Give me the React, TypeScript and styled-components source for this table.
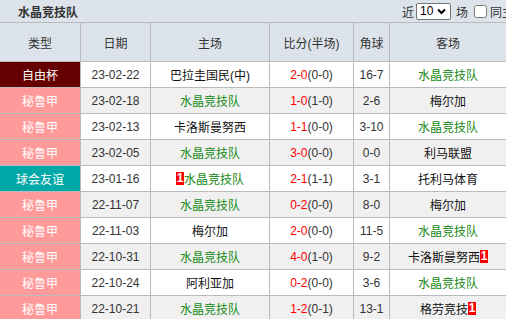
import React from "react";
import styled, { createGlobalStyle } from "styled-components";

const GlobalStyle = createGlobalStyle`
  html, body {
    margin: 0;
    padding: 0;
    background: #fff;
    font-family: "Liberation Sans", "Noto Sans CJK SC", sans-serif;
    font-size: 12px;
    color: #333;
  }
`;

const Panel = styled.div`
  width: 506px;
  overflow: hidden;
`;

const TitleBar = styled.div`
  height: 22px;
  background: #dde3eb;
  display: flex;
  align-items: center;
  justify-content: space-between;
  padding-left: 18px;
  white-space: nowrap;
`;

const Title = styled.div`
  font-weight: bold;
  font-size: 12px;
  color: #333;
`;

const Filter = styled.div`
  display: flex;
  align-items: center;
  margin-right: -20px;
  color: #333;
`;

const SelectBox = styled.span`
  display: inline-flex;
  align-items: center;
  box-sizing: border-box;
  width: 35px;
  height: 17px;
  margin: 0 5px 0 2px;
  padding: 0 4px 0 3px;
  border: 1px solid #767676;
  border-radius: 2px;
  background: #fff;
`;

const Select = styled.select`
  appearance: none;
  -webkit-appearance: none;
  width: 16px;
  flex: none;
  height: 15px;
  font-size: 12px;
  font-family: "Liberation Sans", sans-serif;
  padding: 0;
  border: none;
  background: transparent;
  color: #000;
  outline: none;
`;

const Chevron = styled.svg`
  flex: none;
  margin-left: 1px;
`;

const Check = styled.input`
  width: 13px;
  height: 13px;
  margin: 0 3px 0 6px;
`;

const Table = styled.div`
  display: flex;
  flex-direction: column;
  gap: 1px;
  background: #bbb;
  border-top: 1px solid #bbb;
`;

const Row = styled.div<{ $head?: boolean }>`
  display: grid;
  grid-template-columns: 80px 69px 118px 83px 35px 1fr;
  column-gap: 1px;
  height: ${(p) => (p.$head ? "38px" : "25px")};
`;

const Cell = styled.div<{ $bg?: string; $color?: string }>`
  background: ${(p) => p.$bg || "#fff"};
  color: ${(p) => p.$color || "#333"};
  display: flex;
  align-items: center;
  justify-content: center;
  white-space: nowrap;
  overflow: hidden;
`;

const HeadCell = styled(Cell)`
  background: #dde3eb;
  color: #333;
`;

const Red = styled.span`
  color: #f00;
`;

const Badge = styled.span`
  display: inline-block;
  background: #f00;
  color: #fff;
  font-weight: bold;
  font-size: 12px;
  line-height: 13px;
  width: 8px;
  text-align: center;
`;

type Match = {
  league: string;
  date: string;
  home: string;
  homeBadge?: boolean;
  score: string;
  half: string;
  corner: string;
  away: string;
  awayBadge?: boolean;
};

const TEAM = "水晶竞技队";

const leagueColor: Record<string, string> = {
  自由杯: "#660000",
  秘鲁甲: "#ff9a9a",
  球会友谊: "#00a8a8",
};

const matches: Match[] = [
  { league: "自由杯", date: "23-02-22", home: "巴拉圭国民(中)", score: "2-0", half: "(0-0)", corner: "16-7", away: TEAM },
  { league: "秘鲁甲", date: "23-02-18", home: TEAM, score: "1-0", half: "(1-0)", corner: "2-6", away: "梅尔加" },
  { league: "秘鲁甲", date: "23-02-13", home: "卡洛斯曼努西", score: "1-1", half: "(0-0)", corner: "3-10", away: TEAM },
  { league: "秘鲁甲", date: "23-02-05", home: TEAM, score: "3-0", half: "(0-0)", corner: "0-0", away: "利马联盟" },
  { league: "球会友谊", date: "23-01-16", home: TEAM, homeBadge: true, score: "2-1", half: "(1-1)", corner: "3-1", away: "托利马体育" },
  { league: "秘鲁甲", date: "22-11-07", home: TEAM, score: "0-2", half: "(0-0)", corner: "8-0", away: "梅尔加" },
  { league: "秘鲁甲", date: "22-11-03", home: "梅尔加", score: "2-0", half: "(0-0)", corner: "11-5", away: TEAM },
  { league: "秘鲁甲", date: "22-10-31", home: TEAM, score: "4-0", half: "(1-0)", corner: "9-2", away: "卡洛斯曼努西", awayBadge: true },
  { league: "秘鲁甲", date: "22-10-24", home: "阿利亚加", score: "0-2", half: "(0-0)", corner: "3-6", away: TEAM },
  { league: "秘鲁甲", date: "22-10-21", home: TEAM, score: "1-2", half: "(0-1)", corner: "13-1", away: "格劳竞技", awayBadge: true },
];

const teamColor = (name: string) => (name === TEAM ? "#148a14" : "#111");

const App = () => {
  return (
    <Panel>
      <GlobalStyle />
      <TitleBar>
        <Title>{TEAM}</Title>
        <Filter>
          近
          <SelectBox>
            <Select defaultValue="10">
              <option value="10">10</option>
              <option value="20">20</option>
            </Select>
            <Chevron width="9" height="7" viewBox="0 0 9 7">
              <path d="M1 1.5 L4.5 5 L8 1.5" fill="none" stroke="#000" strokeWidth="2" />
            </Chevron>
          </SelectBox>
          场
          <Check type="checkbox" />
          同主场
        </Filter>
      </TitleBar>
      <Table>
        <Row $head>
          <HeadCell>类型</HeadCell>
          <HeadCell>日期</HeadCell>
          <HeadCell>主场</HeadCell>
          <HeadCell>比分(半场)</HeadCell>
          <HeadCell>角球</HeadCell>
          <HeadCell>客场</HeadCell>
        </Row>
        {matches.map((m, i) => {
          const bg = i % 2 === 1 ? "#f0f0f0" : "#fff";
          return (
            <Row key={m.date}>
              <Cell $bg={leagueColor[m.league]} $color="#fff">
                {m.league}
              </Cell>
              <Cell $bg={bg}>{m.date}</Cell>
              <Cell $bg={bg} $color={teamColor(m.home)}>
                {m.homeBadge && <Badge>1</Badge>}
                {m.home}
              </Cell>
              <Cell $bg={bg}>
                <Red>{m.score}</Red>
                {m.half}
              </Cell>
              <Cell $bg={bg}>{m.corner}</Cell>
              <Cell $bg={bg} $color={teamColor(m.away)}>
                {m.away}
                {m.awayBadge && <Badge>1</Badge>}
              </Cell>
            </Row>
          );
        })}
      </Table>
    </Panel>
  );
};

export default App;
